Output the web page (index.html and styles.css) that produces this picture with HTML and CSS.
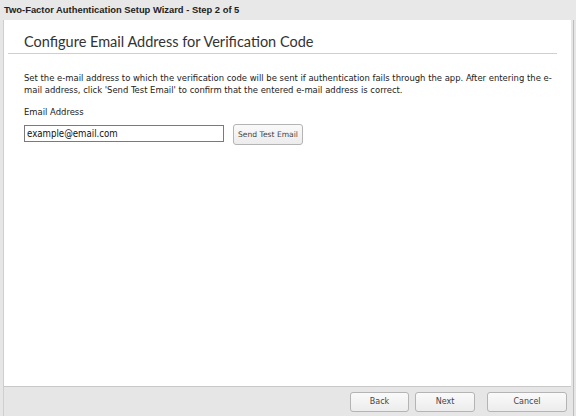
FILE: index.html
```html
<!DOCTYPE html>
<html>
<head>
<meta charset="utf-8">
<link rel="stylesheet" href="styles.css">
</head>
<body>
<div class="window">
  <div class="titlebar">Two-Factor Authentication Setup Wizard - Step 2 of 5</div>
  <div class="frame">
    <div class="panel">
      <h1 class="heading">Configure Email Address for Verification Code</h1>
      <p class="desc">Set the e-mail address to which the verification code will be sent if authentication fails through the app. After entering the e-mail address, click 'Send Test Email' to confirm that the entered e-mail address is correct.</p>
      <div class="label">Email Address</div>
      <div class="row">
        <input class="field" type="text" value="example@email.com">
        <button class="btn small">Send Test Email</button>
      </div>
    </div>
    <div class="footer">
      <button class="btn fbtn back">Back</button>
      <button class="btn fbtn">Next</button>
      <button class="btn fbtn cancel">Cancel</button>
    </div>
  </div>
</div>
</body>
</html>
```
FILE: styles.css
```css
html, body { margin: 0; padding: 0; }
body { width: 576px; height: 416px; overflow: hidden; background: #e6e6e6; font-family: "DejaVu Sans", sans-serif; }
.window { display: flex; flex-direction: column; height: 416px; }
.titlebar { height: 20px; line-height: 20px; padding-left: 4px; font-size: 9.4px; font-weight: bold; color: #222; background: #e8e8e8; font-family: "Liberation Sans", sans-serif; }
.frame { flex: 1; display: flex; flex-direction: column; margin: 0 2px 0 3px; border-right: 1px solid #bdbdbd; border-left: 1px solid #cfcfcf; }
.panel { flex: 1; background: #fff; border-bottom: 1px solid #c8c8c8; padding: 0 14px 0 20px; margin-right: 2px; }
.heading { margin: 13px 0 0 -16px; padding: 0 0 2px 16px; line-height: 18px; font-family: "Lato", sans-serif; font-weight: normal; font-size: 14.5px; color: #333; border-bottom: 1px solid #cfcfcf; }
.desc { margin: 18px 0 0 0; font-size: 9.4px; line-height: 12px; color: #222; font-family: "DejaVu Sans Condensed", sans-serif; }
.label { margin-top: 10px; font-size: 9.4px; line-height: 12px; color: #222; font-family: "DejaVu Sans Condensed", sans-serif; }
.row { display: flex; align-items: flex-start; gap: 9px; margin-top: 6px; }
.field { width: 194px; height: 15px; border: 1px solid #7a7a7a; padding: 0 2px; margin: 1px 0 0 0; font-size: 9.6px; font-family: "DejaVu Sans Condensed", sans-serif; color: #111; }
.btn { background: linear-gradient(#fafafa, #ececec); border: 1px solid #b4b4b4; border-radius: 3px; color: #444; font-family: "DejaVu Sans", sans-serif; padding: 0; margin: 0; }
.small { width: 70px; height: 21px; font-size: 7.6px; }
.footer { height: 29px; display: flex; align-items: center; justify-content: flex-end; padding-right: 6px; }
.fbtn { width: 60px; height: 20px; font-size: 8px; margin-left: 6px; }
.back { width: 59px; }
.cancel { width: 80px; margin-left: 12px; }
```
